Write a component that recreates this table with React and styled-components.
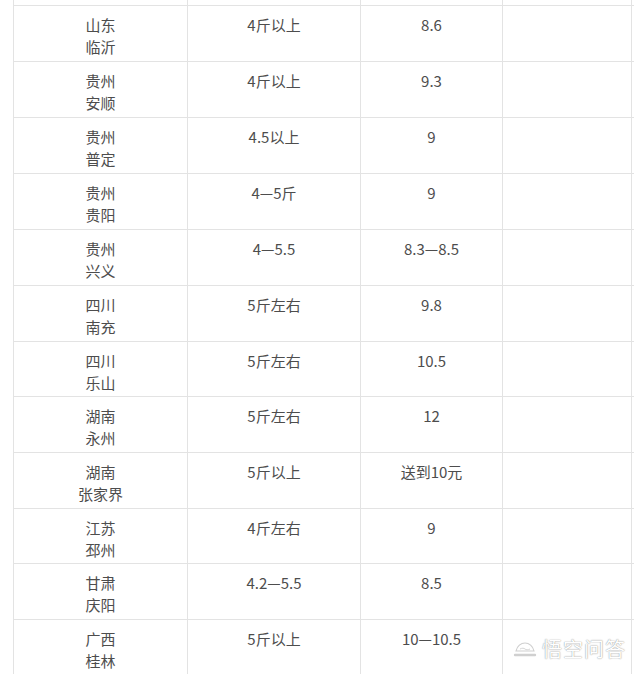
import React from "react";
import styled, { createGlobalStyle } from "styled-components";

const rows = [
    ["山东", "临沂", "4斤以上", "8.6", 56],
    ["贵州", "安顺", "4斤以上", "9.3", 56],
    ["贵州", "普定", "4.5以上", "9", 56],
    ["贵州", "贵阳", "4—5斤", "9", 56],
    ["贵州", "兴义", "4—5.5", "8.3—8.5", 56],
    ["四川", "南充", "5斤左右", "9.8", 56],
    ["四川", "乐山", "5斤左右", "10.5", 55],
    ["湖南", "永州", "5斤左右", "12", 56],
    ["湖南", "张家界", "5斤以上", "送到10元", 56],
    ["江苏", "邳州", "4斤左右", "9", 55],
    ["甘肃", "庆阳", "4.2—5.5", "8.5", 56],
    ["广西", "桂林", "5斤以上", "10—10.5", 56],
];

function App() {
    return (
        <>
            <GlobalStyle />
            <Page>
                <Table>
                    <Row $h={6}>
                        <Cell />
                        <Cell />
                        <Cell />
                        <Cell />
                    </Row>
                    {rows.map((item, i) => (
                        <Row key={i} $h={item[4]}>
                            <Cell>
                                {item[0]}
                                <br />
                                {item[1]}
                            </Cell>
                            <Cell>{item[2]}</Cell>
                            <Cell>{item[3]}</Cell>
                            <Cell />
                        </Row>
                    ))}
                </Table>
                <Watermark>
                    <svg width="26" height="20" viewBox="0 0 26 20">
                        <path
                            d="M4 12c1-5 5-8 9-8s8 3 9 8z"
                            fill="#fff"
                            stroke="#cfcfcf"
                            strokeWidth="1.2"
                        />
                        <path
                            d="M8 10c2-1 4-1 5 0s3 1 5 0"
                            fill="none"
                            stroke="#d6d6d6"
                            strokeWidth="1"
                        />
                        <path
                            d="M3 16h20"
                            stroke="#d0d0d0"
                            strokeWidth="2.4"
                            strokeLinecap="round"
                        />
                    </svg>
                    <span>悟空问答</span>
                </Watermark>
            </Page>
        </>
    );
}

export default App;

const GlobalStyle = createGlobalStyle`
    html, body {
        margin: 0;
        padding: 0;
        background: #fff;
    }
    body {
        font-family: "Noto Sans CJK SC", "Noto Sans", sans-serif;
        overflow: hidden;
    }
`;
const Page = styled.div`
    position: relative;
    width: 640px;
    height: 674px;
    overflow: hidden;
    background: #fff;
`;
const Table = styled.div`
    margin-left: 13px;
    width: 620px;
    border-left: 1px solid #e3e3e3;
`;
const Row = styled.div`
    display: grid;
    grid-template-columns: 174px 173px 142px 129px;
    height: ${(p) => p.$h}px;
    box-sizing: border-box;
    border-bottom: 1px solid #e3e3e3;
`;
const Cell = styled.div`
    border-right: 1px solid #e3e3e3;
    text-align: center;
    font-size: 15px;
    line-height: 22px;
    color: #4d4d4d;
    padding-top: 8px;
    overflow: hidden;
`;
const Watermark = styled.div`
    position: absolute;
    right: 14px;
    bottom: 13px;
    display: flex;
    align-items: center;
    gap: 4px;
    span {
        font-size: 20px;
        line-height: 24px;
        letter-spacing: 1px;
        color: #fff;
        text-shadow: 0 0 1px rgba(0, 0, 0, 0.45), 0 0 2px rgba(0, 0, 0, 0.15);
    }
`;
